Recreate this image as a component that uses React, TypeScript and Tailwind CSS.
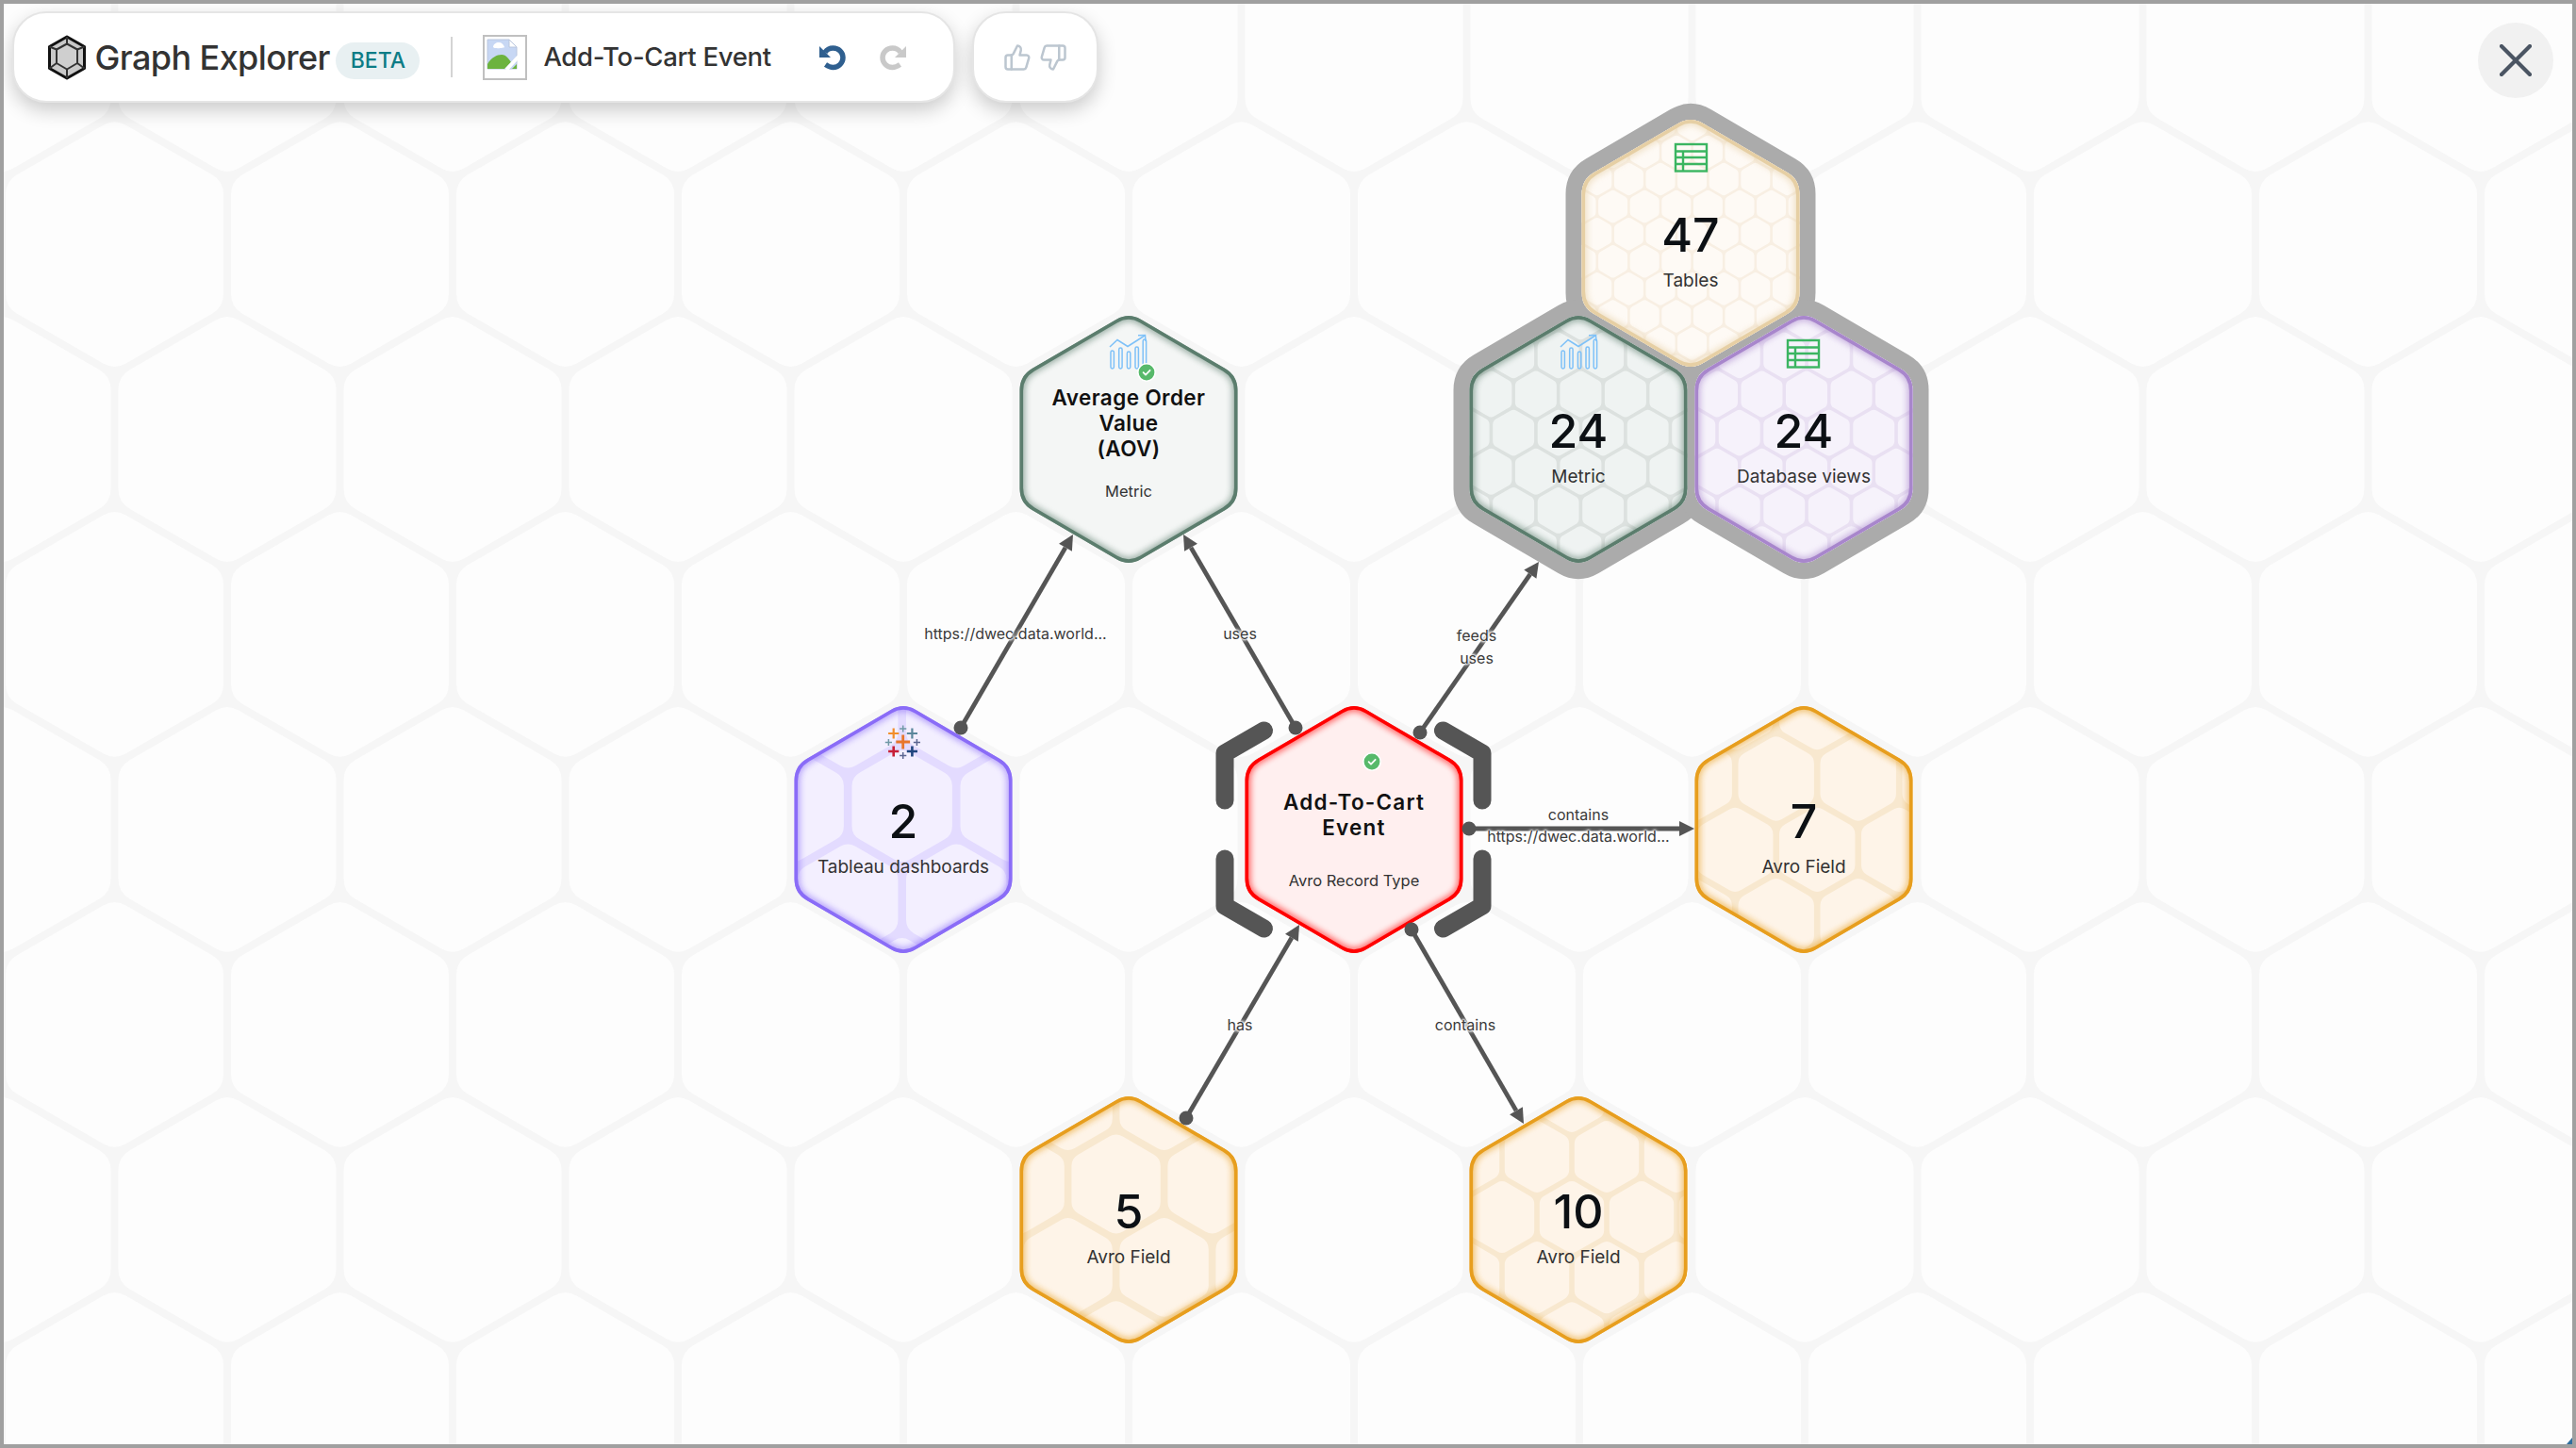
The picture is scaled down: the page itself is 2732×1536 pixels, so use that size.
import React from "react";
import { ThumbsUp, ThumbsDown } from "lucide-react";

const W = 2732;
const H = 1536;
const SANS = "font-['Inter','Noto_Sans',sans-serif]";

function hexPath(cx: number, cy: number, w: number, t: number, sy = 1) {
  const a = w / 2;
  const b = (a / 0.866) * sy;
  const v = [
    [cx, cy - b],
    [cx + a, cy - b / 2],
    [cx + a, cy + b / 2],
    [cx, cy + b],
    [cx - a, cy + b / 2],
    [cx - a, cy - b / 2],
  ];
  const side = b;
  let d = "";
  for (let i = 0; i < 6; i++) {
    const p = v[(i + 5) % 6];
    const c = v[i];
    const n = v[(i + 1) % 6];
    const s = [c[0] + ((p[0] - c[0]) * t) / side, c[1] + ((p[1] - c[1]) * t) / side];
    const e = [c[0] + ((n[0] - c[0]) * t) / side, c[1] + ((n[1] - c[1]) * t) / side];
    d += `${i === 0 ? "M" : "L"}${s[0].toFixed(1)} ${s[1].toFixed(1)}Q${c[0].toFixed(1)} ${c[1].toFixed(1)} ${e[0].toFixed(1)} ${e[1].toFixed(1)}`;
  }
  return d + "Z";
}

function cells(ax: number, ay: number, pitch: number, x0: number, y0: number, x1: number, y1: number, gap: number, t: number) {
  const row = pitch * 0.866;
  const out: string[] = [];
  const jMin = Math.floor((y0 - ay) / row) - 1;
  const jMax = Math.ceil((y1 - ay) / row) + 1;
  for (let j = jMin; j <= jMax; j++) {
    const off = Math.abs(j) % 2 === 1 ? pitch / 2 : 0;
    const iMin = Math.floor((x0 - ax) / pitch) - 1;
    const iMax = Math.ceil((x1 - ax) / pitch) + 1;
    for (let i = iMin; i <= iMax; i++) {
      out.push(hexPath(ax + i * pitch + off, ay + j * row, pitch - gap, t));
    }
  }
  return out.join("");
}

type Pat = { ax: number; ay: number; p: number };
type N = {
  id: string;
  cx: number;
  cy: number;
  border: string;
  fill: string;
  line?: string;
  pat?: Pat;
  num?: string;
  label?: string;
  title?: string[];
  titleClass?: string;
  sub?: string;
  subClass?: string;
  offset?: string;
};

const AVRO = { border: "#e79e1e", fill: "#fef4e8", line: "#f8e8cf" };
const nodes: N[] = [
  { id: "tables", cx: 1793, cy: 258, border: "#e6cfa4", fill: "#fefaf5", line: "#f8efe3", pat: { ax: 1761, ay: 190, p: 33.6 }, num: "47", label: "Tables" },
  { id: "metric", cx: 1674, cy: 466, border: "#5b7d6d", fill: "#eff3f2", line: "#dce1df", pat: { ax: 1676.4, ay: 418, p: 47.5 }, num: "24", label: "Metric" },
  { id: "db", cx: 1913, cy: 466, border: "#a886cc", fill: "#f6f2fb", line: "#e9e0f2", pat: { ax: 1916, ay: 418, p: 47.5 }, num: "24", label: "Database views" },
  { id: "aov", cx: 1197, cy: 466, border: "#5b7d6d", fill: "#f4f6f5", title: ["Average Order", "Value", "(AOV)"], titleClass: "text-[22.5px] tracking-[0.4px]", sub: "Metric", subClass: "mt-[20px]", offset: "pt-[8px]" },
  { id: "tableau", cx: 958, cy: 880, border: "#8a6cf7", fill: "#f3efff", line: "#e3dbff", pat: { ax: 956.7, ay: 855, p: 115 }, num: "2", label: "Tableau dashboards" },
  { id: "center", cx: 1436, cy: 880, border: "#ff0000", fill: "#ffefef", title: ["Add-To-Cart", "Event"], titleClass: "text-[22.5px] tracking-[1.2px]", sub: "Avro Record Type", subClass: "mt-[31px]", offset: "pt-[22px]" },
  { id: "a7", cx: 1913, cy: 880, ...AVRO, pat: { ax: 1883.7, ay: 826, p: 87 }, num: "7", label: "Avro Field" },
  { id: "a5", cx: 1197, cy: 1294, ...AVRO, pat: { ax: 1183.6, ay: 1256, p: 102 }, num: "5", label: "Avro Field" },
  { id: "a10", cx: 1674, cy: 1294, ...AVRO, pat: { ax: 1704, ay: 1227, p: 74 }, num: "10", label: "Avro Field" },
];

const edges = [
  { from: [1019, 772], to: [1138, 567] },
  { from: [1374, 772], to: [1255, 567] },
  { from: [1506, 777], to: [1632, 596] },
  { from: [1558, 879], to: [1797, 879] },
  { from: [1258, 1186], to: [1378, 981] },
  { from: [1497, 986], to: [1616, 1192] },
];

const edgeLabels = [
  { t: "https://dwec.data.world...", x: 1077, y: 672 },
  { t: "uses", x: 1315, y: 672 },
  { t: "feeds", x: 1566, y: 674 },
  { t: "uses", x: 1566, y: 698 },
  { t: "contains", x: 1674, y: 864 },
  { t: "https://dwec.data.world...", x: 1674, y: 887 },
  { t: "has", x: 1315, y: 1087 },
  { t: "contains", x: 1554, y: 1087 },
];

function Edge({ from, to }: { from: number[]; to: number[] }) {
  const dx = to[0] - from[0];
  const dy = to[1] - from[1];
  const len = Math.hypot(dx, dy);
  const ux = dx / len;
  const uy = dy / len;
  const hl = 16;
  const hw = 8;
  const bx = to[0] - ux * hl;
  const by = to[1] - uy * hl;
  return (
    <g>
      <line x1={from[0]} y1={from[1]} x2={bx} y2={by} stroke="#555" strokeWidth={4.8} />
      <circle cx={from[0]} cy={from[1]} r={7.5} fill="#555" />
      <polygon points={`${to[0]},${to[1]} ${bx - uy * hw},${by + ux * hw} ${bx + uy * hw},${by - ux * hw}`} fill="#555" />
    </g>
  );
}

function Hex({ n }: { n: N }) {
  const outer = hexPath(n.cx, n.cy, 231, 15, 1.01);
  const inner = hexPath(n.cx, n.cy, 228, 15, 1.01);
  return (
    <g>
      <clipPath id={`clip-${n.id}`}>
        <path d={outer} />
      </clipPath>
      <path d={outer} fill={n.fill} />
      <g clipPath={`url(#clip-${n.id})`}>
        {n.pat && n.line && (
          <>
            <path d={outer} fill={n.line} />
            <path
              d={cells(n.pat.ax, n.pat.ay, n.pat.p, n.cx - 120, n.cy - 140, n.cx + 120, n.cy + 140, n.pat.p * 0.075, n.pat.p * 0.08)}
              fill={n.fill}
            />
          </>
        )}
        <path d={outer} fill="none" stroke={n.border} strokeWidth={12} opacity={0.55} filter="url(#soft)" />
        <path d={inner} fill="none" stroke={n.border} strokeWidth={4.2} />
      </g>
    </g>
  );
}

function ChartIcon({ x, y }: { x: number; y: number }) {
  const bars = [
    [1, 17],
    [9.7, 14],
    [18.4, 18],
    [27, 13],
    [35.2, 5],
  ];
  return (
    <g transform={`translate(${x} ${y})`} fill="none" stroke="#7ec1f8" strokeWidth={1.5}>
      {bars.map(([bx, top]) => (
        <rect key={bx} x={bx} y={top} width={3.4} height={36 - top} rx={1.7} />
      ))}
      <path d="M0 13L8 5.5L19 12.5L37 1" />
      <path d="M30 0.8L37.5 0.5L38 7" />
    </g>
  );
}

function TableIcon({ x, y }: { x: number; y: number }) {
  return (
    <g transform={`translate(${x} ${y})`} fill="none" stroke="#3bb561" strokeWidth={2.4}>
      <rect x={1} y={1} width={33} height={28.5} />
      <path d="M1 8.500H34M1 15H34M1 22H34M9 8.500V29.500" />
    </g>
  );
}

function Check({ x, y }: { x: number; y: number }) {
  return (
    <g>
      <circle cx={x} cy={y} r={10} fill="#fff" />
      <circle cx={x} cy={y} r={8.4} fill="#57b96a" />
      <path d={`M${x - 3.4} ${y + 0.2}L${x - 1} ${y + 2.6}L${x + 3.6} ${y - 2.2}`} fill="none" stroke="#fff" strokeWidth={1.8} strokeLinecap="round" strokeLinejoin="round" />
    </g>
  );
}

function TableauLogo({ x, y }: { x: number; y: number }) {
  const pl = [
    [0, 0, 7.4, "#e8762c", 2.8],
    [-10, 10, 5.6, "#c72037", 2.6],
    [9.7, 10, 5.6, "#1f457e", 2.6],
    [-10, -9, 5.6, "#f28e2b", 2.2],
    [9.7, -9, 5.6, "#5b879b", 2.2],
    [0, -14, 3.6, "#7099a6", 1.5],
    [0, 14.5, 3.6, "#5b6591", 1.5],
    [-15.3, 0.5, 3.6, "#7099a6", 1.5],
    [14.7, 0.5, 3.6, "#5b6591", 1.5],
  ] as const;
  return (
    <g>
      {pl.map(([dx, dy, a, c, s], i) => (
        <path key={i} d={`M${x + dx - a} ${y + dy}H${x + dx + a}M${x + dx} ${y + dy - a}V${y + dy + a}`} stroke={c} strokeWidth={s} fill="none" />
      ))}
    </g>
  );
}

function Bracket({ sx, sy }: { sx: number; sy: number }) {
  const cx = 1435.5;
  const cy = 880;
  const p = (dx: number, dy: number) => `${cx + sx * dx} ${cy + sy * dy}`;
  return (
    <path
      d={`M${p(95, 105)}L${p(136.5, 81)}L${p(136.5, 31)}`}
      fill="none"
      stroke="#555"
      strokeWidth={19}
      strokeLinecap="round"
      strokeLinejoin="round"
    />
  );
}

function Canvas() {
  const bgOut = cells(1197, 466, 239, -100, -100, W + 100, H + 100, 8, 14);
  const group = nodes.filter((n) => ["tables", "metric", "db"].includes(n.id));
  return (
    <svg className="absolute inset-0" width={W} height={H} viewBox={`0 0 ${W} ${H}`}>
      <defs>
        <filter id="soft" x="-20%" y="-20%" width="140%" height="140%">
          <feGaussianBlur stdDeviation="3" />
        </filter>
      </defs>
      <rect width={W} height={H} fill="#f6f6f6" />
      <path d={bgOut} fill="#fdfdfd" />
      {group.map((n) => (
        <path key={n.id} d={hexPath(n.cx, n.cy, 231, 15, 1.01)} fill="#ababab" stroke="#ababab" strokeWidth={34} strokeLinejoin="round" />
      ))}
      {nodes.map((n) => (
        <Hex key={n.id} n={n} />
      ))}
      <Bracket sx={-1} sy={-1} />
      <Bracket sx={1} sy={-1} />
      <Bracket sx={-1} sy={1} />
      <Bracket sx={1} sy={1} />
      {edges.map((e, i) => (
        <Edge key={i} from={e.from} to={e.to} />
      ))}
      <ChartIcon x={1177} y={355} />
      <ChartIcon x={1655} y={355} />
      <TableIcon x={1776} y={152} />
      <TableIcon x={1895} y={360} />
      <TableauLogo x={957.7} y={787} />
      <Check x={1216} y={395} />
      <Check x={1455} y={808} />
      <path d="M2728 1525L2722 1532H2728Z" fill="#2f6f9f" />
    </svg>
  );
}

function Logo() {
  return (
    <svg width="44" height="48" viewBox="0 0 44 48" fill="none">
      <path d="M22 2L40.500 12.500V35.500L22 46L3.500 35.500V12.500Z" fill="#c9c9c9" stroke="#111" strokeWidth="3" strokeLinejoin="round" />
      <path d="M22 9.500L33 15.500V30L22 36.500L11 30V15.500Z" fill="#cfcfcf" stroke="#333" strokeWidth="2" strokeLinejoin="round" />
      <path d="M22 2V9.500M40.500 12.500L33 15.500M3.500 12.500L11 15.500M22 36.500V46M33 30L40.500 35.500M11 30L3.500 35.500" stroke="#333" strokeWidth="2" />
    </svg>
  );
}

function BrokenImage() {
  return (
    <svg width="47" height="48" viewBox="0 0 47 48" fill="none">
      <rect x="1" y="1" width="45" height="46" fill="#fff" stroke="#c0c0c0" strokeWidth="2" />
      <path d="M5 5H28L36 13V36H5Z" fill="#c7d7f4" stroke="#b9c6de" strokeWidth="1" />
      <path d="M28 5V13H36Z" fill="#fff" stroke="#b9c6de" strokeWidth="1" />
      <path d="M11 13C11 10 14 8 17 8C20 8 22 10 23 13C23 14 12 15 11 13Z" fill="#fff" />
      <path d="M5 36V31C9 24 15 21 20 21C25 21 28 26 30 29L23 36Z" fill="#6cb33f" />
      <path d="M25 37L38 23" stroke="#fff" strokeWidth="4" />
      <path d="M31 36L36 31V36Z" fill="#6cb33f" />
    </svg>
  );
}

function UndoIcon({ color, flip }: { color: string; flip?: boolean }) {
  return (
    <svg width="28" height="28" viewBox="0 0 28 28" fill="none" className={flip ? "-scale-x-100" : ""}>
      <path d="M6 8.500C8 5.500 11 4 14.500 4C20.500 4 25 8.500 25 14C25 19.500 20.500 24.500 14.500 24.500C12 24.500 9.500 23.500 6.500 21.500" stroke={color} strokeWidth="5.500" />
      <path d="M0 2V14H12Z" fill={color} />
    </svg>
  );
}

function Label({ x, y, t }: { x: number; y: number; t: string }) {
  return (
    <div
      className={`absolute -translate-x-1/2 -translate-y-1/2 whitespace-nowrap text-[16px] leading-[20px] text-[#3a3a3a] ${SANS} [text-shadow:0_0_2px_#fff,0_0_2px_#fff,0_0_3px_#fff,0_0_3px_#fff,0_0_4px_#fff,0_0_4px_#fff]`}
      style={{ left: x, top: y }}
    >
      {t}
    </div>
  );
}

function NodeText({ n }: { n: N }) {
  return (
    <div
      className={`absolute flex h-[263px] w-[231px] -translate-x-1/2 -translate-y-1/2 flex-col items-center justify-center text-center ${SANS} ${n.offset ?? ""}`}
      style={{ left: n.cx, top: n.cy }}
    >
      {n.num ? (
        <div className="mt-[18px] flex flex-col items-center">
          <div className="text-[50px] font-medium leading-[48px] text-[#0c1014]">{n.num}</div>
          <div className="mt-[13px] whitespace-nowrap text-[19px] leading-[24px] text-[#333]">{n.label}</div>
        </div>
      ) : (
        <div className="flex flex-col items-center">
          <div className={`font-semibold leading-[27px] text-[#111] ${n.titleClass ?? ""}`}>
            {n.title!.map((l) => (
              <div key={l} className="whitespace-nowrap">{l}</div>
            ))}
          </div>
          <div className={`${n.subClass ?? ""} whitespace-nowrap text-[16.5px] leading-[24px] text-[#333]`}>{n.sub}</div>
        </div>
      )}
    </div>
  );
}

export default function App() {
  return (
    <div className={`relative h-[1536px] w-[2732px] overflow-hidden bg-[#fdfdfd] ${SANS}`}>
      <Canvas />
      {nodes.map((n) => (
        <NodeText key={n.id} n={n} />
      ))}
      {edgeLabels.map((l, i) => (
        <Label key={i} x={l.x} y={l.y} t={l.t} />
      ))}

      <div className="absolute left-[13px] top-[12px] flex gap-[18px]">
        <div className="flex h-[97px] w-[1000px] items-center rounded-[36px] border-2 border-[#e5e5e5] bg-white pl-[34px] shadow-[0_8px_20px_rgba(0,0,0,0.2)]">
          <Logo />
          <span className="ml-[7.5px] text-[36px] font-medium tracking-[-0.6px] text-[#333]">Graph Explorer</span>
          <span className="ml-[6.5px] mt-[7px] flex h-[39px] w-[89px] items-center justify-center rounded-full bg-[#e8f0f2] text-[23px] font-medium text-[#0d7c86]">BETA</span>
          <span className="ml-[33px] h-[43px] w-[2px] bg-[#d4d4d4]" />
          <span className="ml-[32px] flex"><BrokenImage /></span>
          <span className="ml-[17px] text-[27.5px] font-medium tracking-[-0.3px] text-[#333]">Add-To-Cart Event</span>
          <span className="ml-[51px] flex"><UndoIcon color="#2f5f8f" /></span>
          <span className="ml-[36px] flex"><UndoIcon color="#c9c9c9" flip /></span>
        </div>
        <div className="flex h-[97px] w-[134px] items-center justify-center gap-[8px] rounded-[36px] border-2 border-[#e5e5e5] bg-white shadow-[0_8px_20px_rgba(0,0,0,0.2)]">
          <ThumbsUp size={30} strokeWidth={2} color="#bcc6d0" />
          <ThumbsDown size={30} strokeWidth={2} color="#bcc6d0" />
        </div>
      </div>

      <button className="absolute left-[2628px] top-[24px] flex h-[80px] w-[80px] items-center justify-center rounded-full bg-[#f1f1f1]">
        <svg width="34" height="34" viewBox="0 0 34 34" fill="none">
          <path d="M2 2L32 32M32 2L2 32" stroke="#4b5563" strokeWidth="4.200" strokeLinecap="round" />
        </svg>
      </button>

      <div className="pointer-events-none absolute inset-0 border-4 border-[#a0a0a0]" />
    </div>
  );
}
